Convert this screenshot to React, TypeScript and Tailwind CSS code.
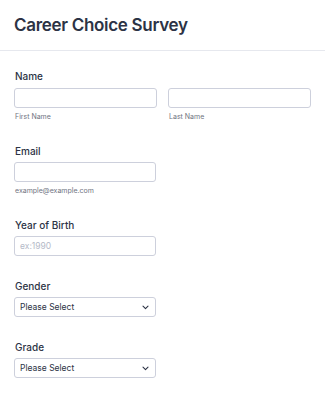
import React from "react";

const Chevron = () => (
  <svg width="7" height="5" viewBox="0 0 7 5" fill="none">
    <path d="M1 1.2 L3.5 3.6 L6 1.2" stroke="#2c3345" strokeWidth="1.1" strokeLinecap="round" strokeLinejoin="round" />
  </svg>
);

function Label({ children }: { children: React.ReactNode }) {
  return <div className="text-[10px] leading-[12px] font-medium text-[#2c3345] ml-px">{children}</div>;
}

function Select() {
  return (
    <div className="w-[142px] h-[20px] border border-[#cdd0dc] rounded-[3px] flex items-center justify-between pl-[5px] pr-[6px] bg-white">
      <span className="text-[8.5px] text-[#2c3345]">Please Select</span>
      <Chevron />
    </div>
  );
}

export default function App() {
  return (
    <div className="w-[325px] h-[400px] bg-white overflow-hidden" style={{ fontFamily: "Inter, 'Noto Sans', sans-serif" }}>
      <div className="h-[51px] border-b border-[#e6e8ee] px-[14px] pt-[14px]">
        <h1 className="text-[17px] leading-[23px] font-semibold tracking-[-0.3px] text-[#2c3345]">Career Choice Survey</h1>
      </div>
      <div className="px-[14px]">
        <div className="pt-[19px]">
          <Label>Name</Label>
          <div className="mt-[6px] flex gap-[11px]">
            <div className="flex flex-col">
              <div className="w-[143px] h-[20px] border border-[#cdd0dc] rounded-[3px]" />
              <div className="mt-[4px] text-[7px] leading-[9px] text-[#6f7482] ml-px">First Name</div>
            </div>
            <div className="flex flex-col">
              <div className="w-[143px] h-[20px] border border-[#cdd0dc] rounded-[3px]" />
              <div className="mt-[4px] text-[7px] leading-[9px] text-[#6f7482] ml-px">Last Name</div>
            </div>
          </div>
        </div>
        <div className="pt-[24px]">
          <Label>Email</Label>
          <div className="mt-[5px] w-[142px] h-[20px] border border-[#cdd0dc] rounded-[3px]" />
          <div className="mt-[4px] text-[7px] leading-[9px] text-[#6f7482] ml-px">example@example.com</div>
        </div>
        <div className="pt-[24px]">
          <Label>Year of Birth</Label>
          <div className="mt-[5px] w-[142px] h-[20px] border border-[#cdd0dc] rounded-[3px] flex items-center pl-[5px]">
            <span className="text-[8.5px] text-[#b5bac8]">ex:1990</span>
          </div>
        </div>
        <div className="pt-[24px]">
          <Label>Gender</Label>
          <div className="mt-[5px]"><Select /></div>
        </div>
        <div className="pt-[24px]">
          <Label>Grade</Label>
          <div className="mt-[5px]"><Select /></div>
        </div>
      </div>
    </div>
  );
}
